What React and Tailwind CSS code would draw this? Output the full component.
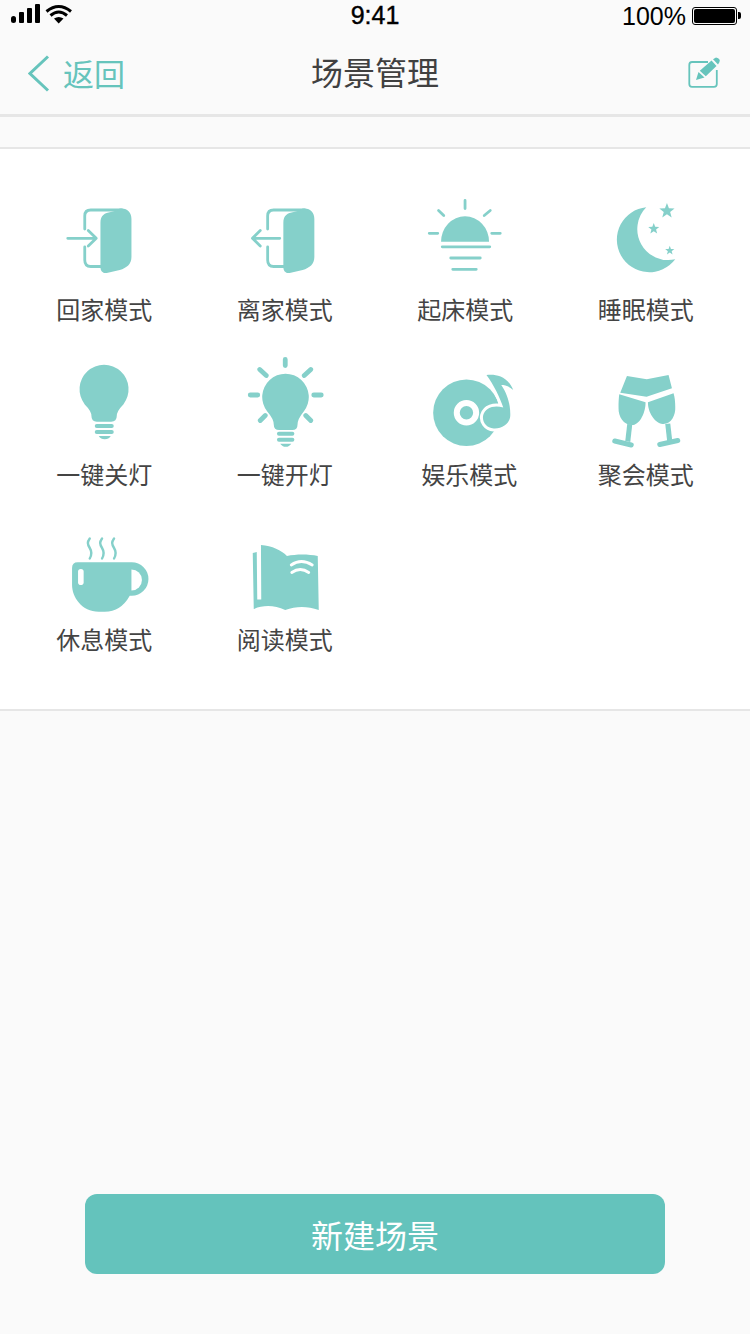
import React from 'react';

const TEAL = '#85d0ca';
const ACCENT = '#66c4bc';

const starPoints = (cx, cy, r) => {
  const pts = [];
  for (let i = 0; i < 10; i++) {
    const rad = i % 2 === 0 ? r : r * 0.42;
    const a = (Math.PI / 5) * i - Math.PI / 2;
    pts.push(`${(cx + rad * Math.cos(a)).toFixed(2)},${(cy + rad * Math.sin(a)).toFixed(2)}`);
  }
  return pts.join(' ');
};

// door outline + door leaf, drawn at the "home" position
const Door = () => (
  <>
    <path d="M85 229V216Q85 210 91 210H122M85 247V260Q85 266.5 91 266.5H102" fill="none" stroke={TEAL} strokeWidth="2.8" strokeLinecap="round" />
    <path d="M100.7 223C100.7 215 105 213 111 212C115 211 118 210.5 120 208.5H122C128 208.5 131.7 213 131.7 219V257C131.7 264 127 268 120 270L107 273C103 273.5 100.7 271 100.7 267Z" fill={TEAL} />
  </>
);

const HomeIcon = () => (
  <>
    <Door />
    <path d="M68 238.3H96M88.5 230.5L96.5 238.3L88.5 246" fill="none" stroke={TEAL} strokeWidth="2.8" strokeLinecap="round" strokeLinejoin="round" />
  </>
);

const LeaveIcon = () => (
  <>
    <g transform="translate(182.4 0)"><Door /></g>
    <path d="M279.5 238.3H252.5M260 230.5L252.2 238.3L260 246" fill="none" stroke={TEAL} strokeWidth="2.8" strokeLinecap="round" strokeLinejoin="round" />
  </>
);

const SunIcon = () => (
  <>
    <path d="M465.3 200.5V208.5M438.8 210.5L444 215.5M490.5 210.5L484.5 215.5M429.5 233.3H438M492 233.3H500.5" fill="none" stroke={TEAL} strokeWidth="2.8" strokeLinecap="round" />
    <path d="M441.3 241.7A24 25.5 0 0 1 489.3 241.7Z" fill={TEAL} />
    <path d="M442.5 246.8H490M451 258H480.5M453 269.3H476.5" fill="none" stroke={TEAL} strokeWidth="2.8" strokeLinecap="round" />
  </>
);

const MoonIcon = () => (
  <>
    <path d="M646 207.3A32.5 32.5 0 1 0 675 259.3A31 31 0 0 1 646 207.3Z" fill={TEAL} />
    <polygon points={starPoints(666.7, 211, 8)} fill={TEAL} />
    <polygon points={starPoints(653.5, 228.8, 5.8)} fill={TEAL} />
    <polygon points={starPoints(669.5, 250.6, 4.8)} fill={TEAL} />
  </>
);

const BulbOff = () => (
  <>
    <path d="M91.7 416Q91.7 411 85 404.4A24.5 24.5 0 1 1 123.6 404.4Q117 411 117 416Q117 421.7 111.5 421.7H97Q91.7 421.7 91.7 416Z" fill={TEAL} />
    <rect x="95" y="424" width="19" height="4" rx="2" fill={TEAL} />
    <rect x="95" y="430" width="19" height="4" rx="2" fill={TEAL} />
    <path d="M99 436H111Q109 439.3 105 439.3Q101 439.3 99 436Z" fill={TEAL} />
  </>
);

const BulbOn = () => (
  <>
    <path d="M285 359.5V365.5M259.5 369.5L266 375.5M310.5 369.5L304 375.5M250 395H257.5M313.5 395H321M260 420.5L265 415.5M310.5 420.5L305.5 415.5" fill="none" stroke={TEAL} strokeWidth="4.8" strokeLinecap="round" />
    <path d="M273.5 424.5Q273.5 419 267 411.5A23.3 23.3 0 1 1 303.5 411.5Q297.3 419 297.3 424.5Q297.3 430 292 430H279Q273.5 430 273.5 424.5Z" fill={TEAL} />
    <rect x="276.7" y="431.8" width="17.4" height="4" rx="2" fill={TEAL} />
    <rect x="276.7" y="437.7" width="17.4" height="4" rx="2" fill={TEAL} />
    <path d="M280 443.7H291Q289 446.8 285.5 446.8Q282 446.8 280 443.7Z" fill={TEAL} />
  </>
);

const NOTE = 'M486.7 375C493 374 507 374 513.5 390C509 386 505 385 501.5 385C507 393 511 404 510.5 416C510 424 502 429 494 428.5C486 428 482 421 483.5 415C485.5 408 494 404.5 503.5 407.5C500 397 494 385 486.7 375Z';

const DiscIcon = () => (
  <>
    <circle cx="466.7" cy="412.7" r="33.3" fill={TEAL} />
    <circle cx="466.7" cy="412.7" r="9.7" fill={TEAL} stroke="#fff" strokeWidth="6" />
    <path d={NOTE} fill={TEAL} stroke="#fff" strokeWidth="6" strokeLinejoin="round" />
    <path d={NOTE} fill={TEAL} />
  </>
);

const GlassesIcon = () => (
  <>
    <path d="M626.7 376L646.5 379.3L668.3 375L671.7 388.3L646.3 396.7L620 392.7Z" fill={TEAL} />
    <path d="M619 394.3L645.3 402.3C645.5 412 640 424 633 425C624 426 618 417 618.3 408.3C618.2 403 618.5 398 619 394.3Z" fill={TEAL} />
    <path d="M673.3 393.3L647.7 402.3C647.5 412 654 423 662.5 424C671 424.5 675.5 415 675 407C675 402 674.5 397 673.3 393.3Z" fill={TEAL} />
    <path d="M627 424L632 424.5L630 442L625 441Z" fill={TEAL} />
    <path d="M665 424L670 423.5L672 441L667 442Z" fill={TEAL} />
    <path d="M614.5 441L631 445M659.5 444.5L677.5 440.5" fill="none" stroke={TEAL} strokeWidth="5" strokeLinecap="round" />
  </>
);

const CupIcon = () => (
  <>
    <path d="M90 538.5C87.5 542 87.5 544 90 548C92.5 552 92 555 90 558.5M102.3 538.5C99.8 542 99.8 544 102.3 548C104.8 552 104.3 555 102.3 558.5M114.3 538.5C111.8 542 111.8 544 114.3 548C116.8 552 116.3 555 114.3 558.5" fill="none" stroke={TEAL} strokeWidth="2.4" strokeLinecap="round" />
    <path d="M78 562.3H132A16.7 16.7 0 0 1 132 595.7H130Q121 611.7 105 611.7H99C82 611.7 72.3 597 72.3 585V568Q72.3 562.3 78 562.3Z" fill={TEAL} />
    <path d="M131.7 569.5A10.5 10.5 0 0 1 131.7 590.5Z" fill="#fff" />
    <rect x="78.3" y="569" width="5.6" height="16" rx="2.8" fill="#fff" />
  </>
);

const BookIcon = () => (
  <>
    <path d="M252.5 553L256.5 552L257 599.5H261L260.7 545C272 546 281 550 286.7 556C296 554 308 554 317.5 556L318.5 610C307 606 296 606 285 610C274 605 263 605 253.5 609Z" fill={TEAL} />
    <path d="M291 565Q301 558 312 565M291.5 572.5Q300 566.5 308.5 572.5" fill="none" stroke="#fff" strokeWidth="2.8" strokeLinecap="round" />
  </>
);

const scenes = [
  { name: '回家模式', vb: '54.25 192 100 92', Icon: HomeIcon },
  { name: '离家模式', vb: '234.75 192 100 92', Icon: LeaveIcon },
  { name: '起床模式', vb: '415.25 192 100 92', Icon: SunIcon },
  { name: '睡眠模式', vb: '595.75 192 100 92', Icon: MoonIcon },
  { name: '一键关灯', vb: '54.25 357 100 92', Icon: BulbOff },
  { name: '一键开灯', vb: '234.75 357 100 92', Icon: BulbOn },
  { name: '娱乐模式', vb: '415.25 357 100 92', Icon: DiscIcon, shift: true },
  { name: '聚会模式', vb: '595.75 357 100 92', Icon: GlassesIcon },
  { name: '休息模式', vb: '54.25 522 100 92', Icon: CupIcon },
  { name: '阅读模式', vb: '234.75 522 100 92', Icon: BookIcon },
];

function StatusBar() {
  return (
    <div className="relative flex h-10 items-center justify-between pl-[11px] pr-[9px] font-['Liberation_Sans',sans-serif] text-[25px] text-black">
      <svg width="62" height="20" viewBox="11 4 62 20" className="mb-[13px]">
        <rect x="11" y="16" width="5" height="7" rx="2.5" />
        <rect x="19" y="12" width="5" height="11" rx="1" />
        <rect x="27" y="8" width="5" height="15" rx="1" />
        <rect x="35" y="4" width="5" height="19" rx="1" />
        <path d="M46.5 11.5Q58.7 1.5 71 11.5M50.5 15.5Q58.7 8.5 67 15.5" fill="none" stroke="#000" strokeWidth="3" />
        <path d="M54 18.5Q58.7 15.5 63.5 18.5L58.7 23.5Z" />
      </svg>
      <span className="absolute left-0 right-0 top-[-1px] text-center leading-[32px] [-webkit-text-stroke:0.4px_black]">9:41</span>
      <div className="mb-[9px] flex items-center gap-[6px]">
        <span className="leading-[30px]">100%</span>
        <div className="flex items-center gap-px">
          <div className="h-[18px] w-[45px] rounded-[3px] border border-black p-px">
            <div className="h-full w-full rounded-[2px] bg-black" />
          </div>
          <div className="h-[7px] w-[3px] rounded-r-[2px] bg-black" />
        </div>
      </div>
    </div>
  );
}

function NavBar() {
  return (
    <div className="relative flex h-[77px] items-center justify-between border-b-[3px] border-[#e6e6e6] pb-2 pl-[28px] pr-[29px]">
      <div className="flex items-center gap-[13px]">
        <svg width="22" height="37" viewBox="0 0 22 37">
          <path d="M20 1.5L2 18.5L20 35.5" fill="none" stroke={ACCENT} strokeWidth="3" />
        </svg>
        <span className="text-[31px] leading-10 text-[#66c4bc]">返回</span>
      </div>
      <span className="absolute left-0 right-0 top-[11px] text-center text-[32px] leading-10 text-[#404040]">场景管理</span>
      <svg width="34" height="32" viewBox="687 57 34 32">
        <path d="M708 62H692Q689.3 62 689.3 65V84Q689.3 86.8 692 86.8H714Q716.8 86.8 716.8 84V70" fill="none" stroke={ACCENT} strokeWidth="1.8" />
        <path d="M696 80L698.5 72L704.5 77.5Z" fill={ACCENT} />
        <path d="M699.8 70.8L711.5 60.5L716.5 66L705.8 76.3Z" fill={ACCENT} />
        <path d="M713 59.2L716 57.5Q718.5 57.5 719.8 60Q720 62 718 64.5Z" fill={ACCENT} />
      </svg>
    </div>
  );
}

export default function App() {
  return (
    <div className="flex h-[1334px] flex-col bg-[#fafafa] font-['Noto_Sans_CJK_SC',sans-serif]">
      <StatusBar />
      <NavBar />
      <div className="h-[30px]" />

      {/* Scene grid */}
      <div className="grid grid-cols-4 gap-y-[32px] border-y-2 border-[#e6e6e6] bg-white px-[14px] pb-[54px] pt-[43px]">
        {scenes.map(({ name, vb, Icon, shift }) => (
          <div key={name} className="flex flex-col items-center">
            <svg width="100" height="92" viewBox={vb} className="overflow-visible">
              <Icon />
            </svg>
            <span className={`mb-[2px] mt-[11px] h-7 text-[24px] leading-7 text-[#444444] ${shift ? 'ml-2' : ''}`}>{name}</span>
          </div>
        ))}
      </div>

      <div className="flex-1" />

      <div className="px-[85px] pb-[60px]">
        <button className="h-20 w-full rounded-xl bg-[#64c3bc] text-[32px] text-white">新建场景</button>
      </div>
    </div>
  );
}
